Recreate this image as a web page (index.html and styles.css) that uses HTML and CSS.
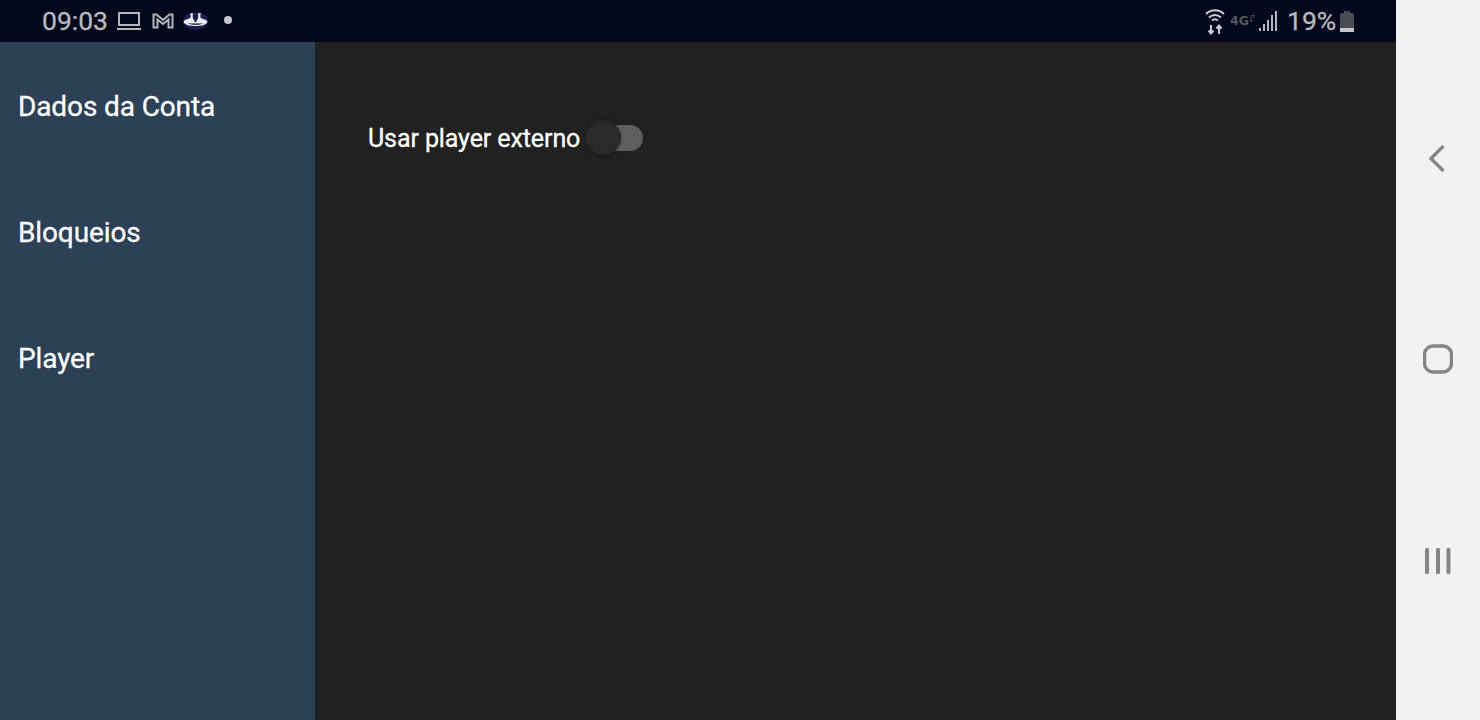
FILE: index.html
```html
<!DOCTYPE html>
<html lang="en">
<head>
    <meta charset="UTF-8">
    <meta name="viewport" content="width=device-width, initial-scale=1.0">
    <title>Configurações</title>
    <link rel="stylesheet" href="styles.css">
</head>
<body>
    <div class="screen">
        <div class="status-bar">
            <div class="status-left">
                <span class="clock">09:03</span>
                <svg class="icon-laptop" width="26" height="20" viewBox="0 0 26 20" fill="none" stroke="#b4b6ba" stroke-width="2">
                    <rect x="3" y="2" width="20" height="12"/>
                    <path d="M1 18H25"/>
                </svg>
                <svg class="icon-mail" width="22" height="16" viewBox="0 0 22 16" fill="none" stroke="#b4b6ba" stroke-width="2">
                    <path d="M1.500 1.500H4.500L11 7L17.500 1.500H20.500V14.500H16.500V6.500L11 11L5.500 6.500V14.500H1.500Z"/>
                </svg>
                <svg class="icon-app" width="25" height="18" viewBox="0 0 25 18">
                    <ellipse cx="12.500" cy="9" rx="12.500" ry="9" fill="#1c2050"/>
                    <path d="M0.500 10C2 7 5 7.500 7 6C8 5 8 3.500 7 1.500L10 1C9.500 4 9.500 7.500 11.500 8.500V10Z" fill="#eceef2"/>
                    <path d="M24.500 10C23 7 20 7.500 18 6C17 5 17 3.500 18 1.500L15 1C15.500 4 15.500 7.500 13.500 8.500V10Z" fill="#eceef2"/>
                    <path d="M0.500 10H24.500C23 13 18 14 12.500 14C7 14 2 13 0.500 10Z" fill="#eceef2"/>
                    <path d="M4.500 11.500H20.500C18 12.500 15 12.800 12.500 12.800C10 12.800 7 12.500 4.500 11.500Z" fill="#03081c"/>
                </svg>
                <span class="dot"></span>
            </div>
            <div class="status-right">
                <svg class="icon-wifi" width="20" height="27" viewBox="0 0 20 27" fill="none" stroke="#c8cacd" stroke-width="2">
                    <path d="M1 6C6 1 14 1 19 6"/>
                    <path d="M4 9.500C7.500 6 12.500 6 16 9.500"/>
                    <path d="M7 12.500C8.800 11 11.200 11 13 12.500"/>
                    <path d="M6 17V25M3.500 22.500L6 25.500L8.500 22.500M14 26V18M11.500 20.500L14 17.500L16.500 20.500"/>
                </svg>
                <span class="net-type"><span class="net-4g">4G</span><span class="net-lte">LTE</span></span>
                <svg class="icon-signal" width="20" height="22" viewBox="0 0 20 22" fill="#b4b6ba">
                    <rect x="1" y="18" width="2" height="3"/>
                    <rect x="5" y="14" width="2" height="7"/>
                    <rect x="9" y="10" width="2" height="11"/>
                    <rect x="13" y="5" width="2" height="16"/>
                    <rect x="17" y="1" width="2" height="20"/>
                </svg>
                <span class="battery-text">19%</span>
                <span class="battery"><span class="battery-fill"></span></span>
            </div>
        </div>
        <div class="main">
            <div class="sidebar">
                <div class="menu-item">Dados da Conta</div>
                <div class="menu-item">Bloqueios</div>
                <div class="menu-item">Player</div>
            </div>
            <div class="content">
                <div class="option">
                    <span class="option-label">Usar player externo</span>
                    <span class="switch"><span class="switch-thumb"></span></span>
                </div>
            </div>
        </div>
    </div>
    <div class="nav-bar">
        <svg width="18" height="32" viewBox="0 0 18 32" fill="none" stroke="#858585" stroke-width="3.400">
            <path d="M14.500 4L2 16.500L14.500 29"/>
        </svg>
        <svg width="30" height="30" viewBox="0 0 30 30" fill="none" stroke="#858585" stroke-width="3.400">
            <rect x="1.500" y="2" width="27" height="26" rx="8.500"/>
        </svg>
        <svg width="28" height="34" viewBox="0 0 28 34" fill="#858585">
            <rect x="1" y="4" width="4" height="26" rx="1.500"/>
            <rect x="12" y="4" width="4" height="26" rx="1.500"/>
            <rect x="22.500" y="4" width="4" height="26" rx="1.500"/>
        </svg>
    </div>
</body>
</html>
```

FILE: styles.css
```css
html, body {
    height: 100%;
}

body {
    display: flex;
    margin: 0;
    overflow: hidden;
    font-family: Roboto, sans-serif;
    background-color: #f2f2f2;
}

.screen {
    display: flex;
    flex-direction: column;
    width: 1396px;
    height: 720px;
}

.status-bar {
    display: flex;
    justify-content: space-between;
    align-items: center;
    height: 42px;
    padding: 0 42px;
    box-sizing: border-box;
    background-color: #03081c;
    color: #b8babe;
}

.status-left, .status-right {
    display: flex;
    align-items: center;
}

.clock {
    width: 65px;
    margin-top: -2px;
    margin-right: 9px;
    font-size: 26.500px;
    -webkit-text-stroke: 0.3px #b8babe;
    white-space: nowrap;
}

.icon-laptop {
    margin-right: 10px;
}

.icon-mail {
    margin-right: 9px;
}

.dot {
    width: 8px;
    height: 8px;
    margin-top: -2px;
    margin-left: 16px;
    border-radius: 50%;
    background-color: #c4c6ca;
}

.net-type {
    display: flex;
    align-self: flex-start;
    width: 25px;
    margin: 8px 0 0 5px;
    color: #54565c;
    font-family: "DejaVu Sans", sans-serif;
    font-size: 12.500px;
    font-weight: 700;
    line-height: 12px;
}

.net-4g {
    width: 19px;
}

.net-lte {
    width: 5px;
    margin-left: 1px;
    overflow: hidden;
    font-size: 4px;
    line-height: 4px;
    word-break: break-all;
}

.icon-signal {
    margin-left: 3px;
}

.battery-text {
    width: 49px;
    margin-top: -2px;
    margin-left: 9px;
    margin-right: 4px;
    font-size: 26.500px;
    -webkit-text-stroke: 0.3px #b8babe;
}

.battery {
    display: flex;
    align-items: flex-end;
    position: relative;
    width: 14px;
    height: 19px;
    margin-top: 2px;
    border-radius: 2px;
    background-color: #4a4c54;
}

.battery::before {
    content: "";
    position: absolute;
    top: -2px;
    left: 4px;
    width: 6px;
    height: 2px;
    background-color: #4a4c54;
}

.battery-fill {
    width: 100%;
    height: 4px;
    background-color: #c4c6ca;
}

.main {
    display: flex;
    flex: 1;
}

.sidebar {
    width: 315px;
    background-color: #2c4056;
}

.menu-item {
    display: flex;
    align-items: center;
    height: 126px;
    padding-left: 18px;
    padding-top: 2px;
    box-sizing: border-box;
    color: white;
    font-size: 28px;
    letter-spacing: -0.12px;
    -webkit-text-stroke: 0.3px white;
}

.content {
    flex: 1;
    padding: 78px 0 0 53px;
    background-color: #212121;
}

.option {
    display: flex;
    align-items: center;
    height: 36px;
}

.option-label {
    color: white;
    font-size: 25px;
    letter-spacing: -0.1px;
    -webkit-text-stroke: 0.3px white;
}

.switch {
    display: flex;
    align-items: center;
    position: relative;
    width: 57px;
    height: 26px;
    margin-left: 6px;
    border-radius: 13px;
    background-color: #5e5e5e;
}

.switch-thumb {
    position: absolute;
    left: 0;
    top: -5px;
    width: 35px;
    height: 35px;
    border-radius: 50%;
    background-color: #2a2a2a;
    box-shadow: 0 1px 3px rgba(0, 0, 0, 0.4);
}

.nav-bar {
    display: flex;
    flex-direction: column;
    align-items: center;
    gap: 170px;
    flex: 1;
    padding-top: 142px;
}
```
